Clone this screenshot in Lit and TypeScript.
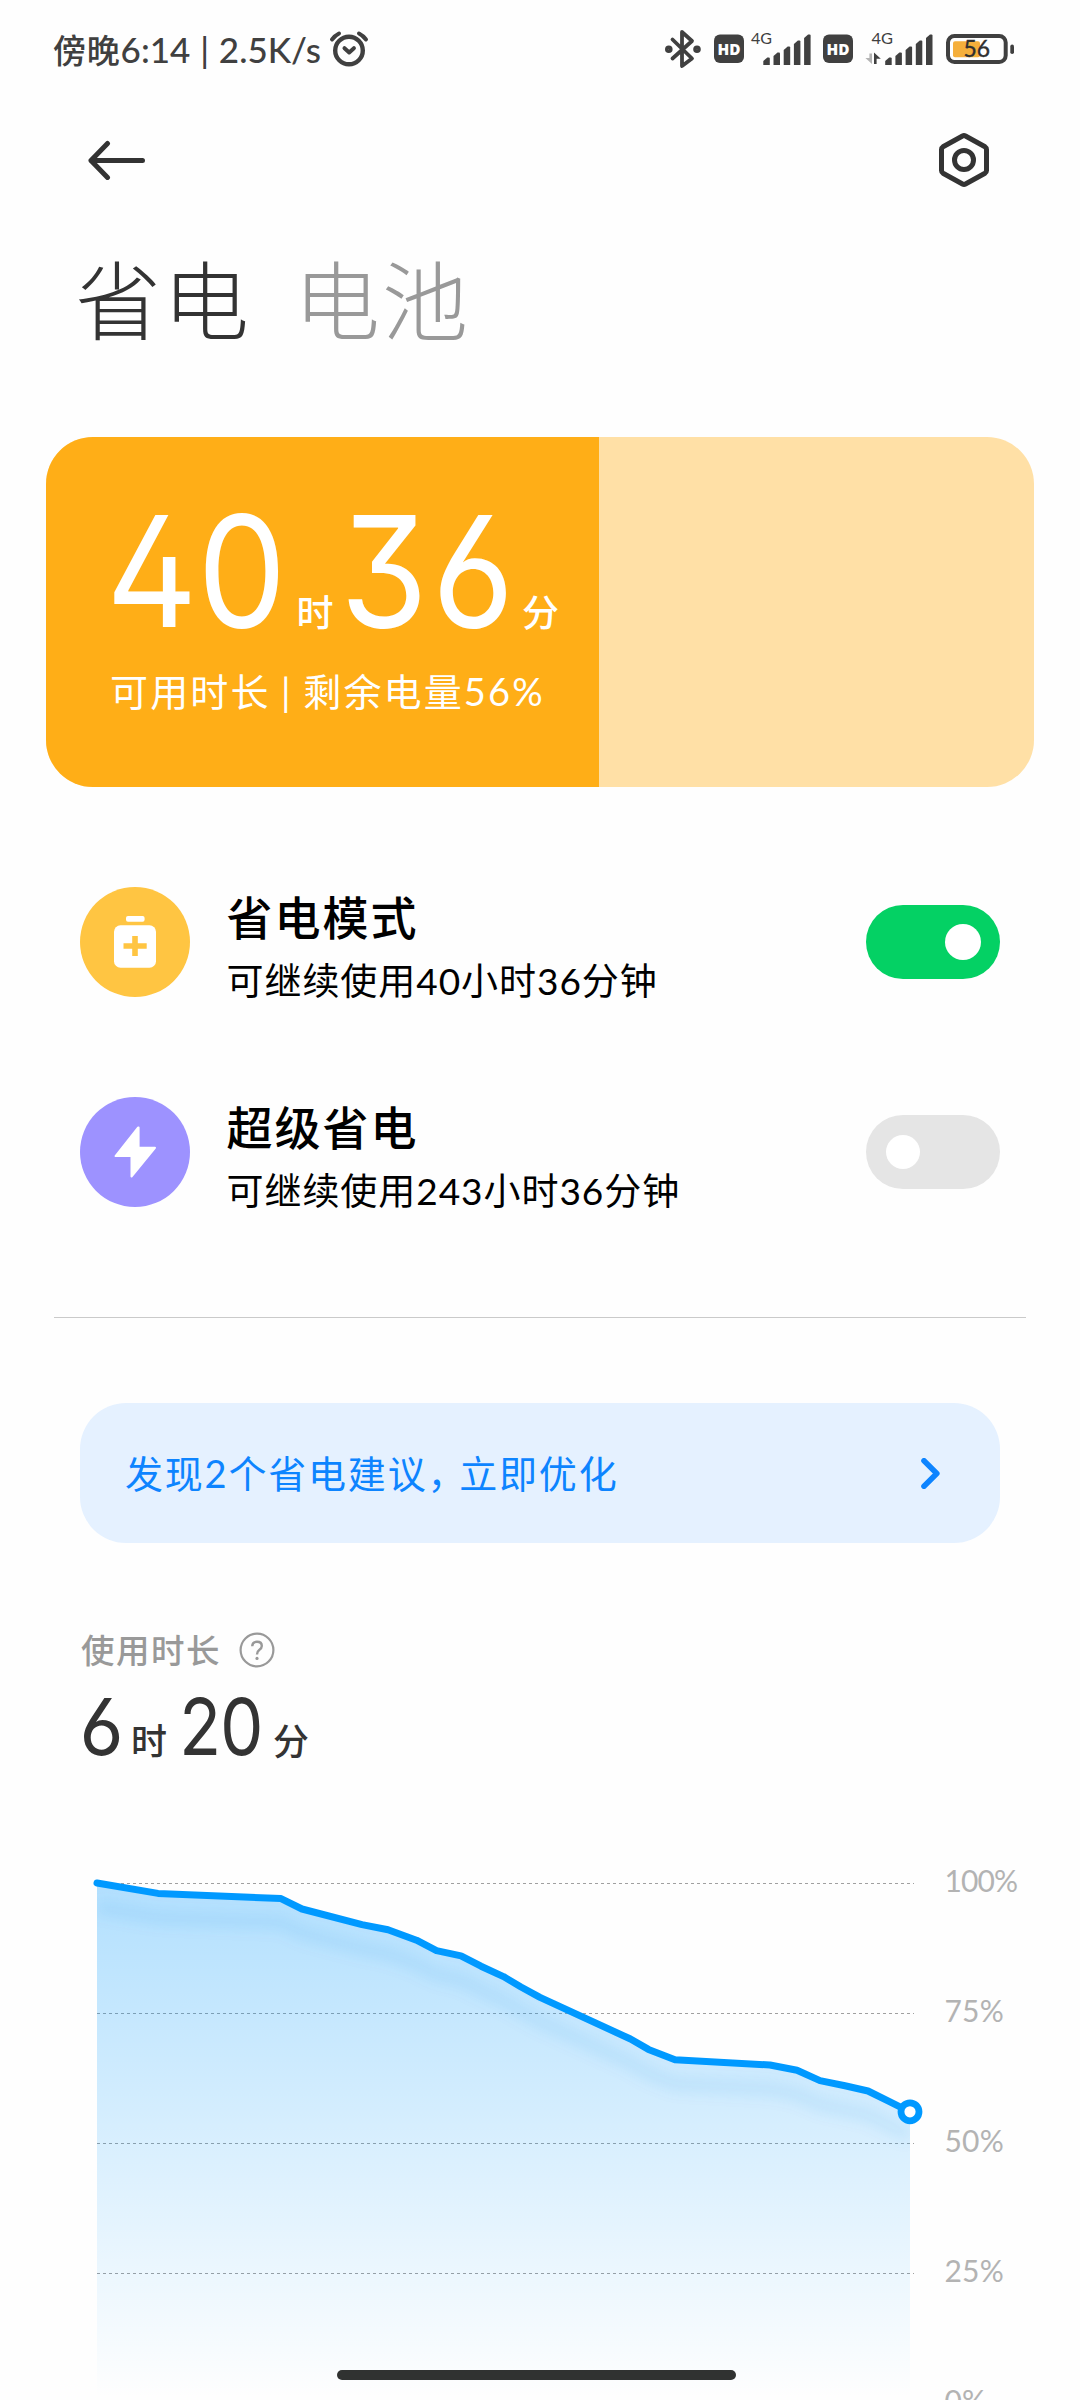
import { LitElement, html, css, svg } from "lit";
import { customElement, property } from "lit/decorators.js";

/** Battery level samples: [x in px from the chart's left edge, level in %]. */
const SAMPLES: [number, number][] = [
  [0, 100], [61, 98], [184, 97], [205, 95], [265, 92], [291, 91], [319.5, 89],
  [339.5, 87], [364, 86], [384, 84], [406.5, 82], [424, 80], [443, 78],
  [533.5, 70], [551.5, 68], [578, 66], [673, 65], [700, 64], [723, 62],
  [748, 61], [771, 60], [792, 58], [813, 56],
];
const LEVELS = [100, 75, 50, 25, 0];
const yOf = (level: number) => 20 + (100 - level) * 5.2;

@customElement("status-bar")
export class StatusBar extends LitElement {
  static styles = css`
    :host {
      display: flex;
      align-items: center;
      height: 100px;
      padding: 0 66px 0 53px;
      color: #404040;
    }
    .time {
      width: 268px;
      padding-bottom: 2px;
      font: 500 35px/40px Lato, "Noto Sans CJK SC", sans-serif;
      word-spacing: 1px;
      white-space: pre;
    }
    .period { font-size: 33px; letter-spacing: 0.8px; }
    .alarm { margin-left: 7.5px; }
    .cluster { display: flex; margin-left: auto; }
    .hd { margin: 0 7px 0 13px; }
    .hd.second { margin: 0 12px; }
    .battery { margin-left: 14px; }
    svg { display: block; overflow: visible; }
    text { font-family: Lato, "Liberation Sans", sans-serif; }
    .hd text { font-family: "Open Sans", sans-serif; font-weight: 800; }
  `;

  private bars(x: number) {
    return [8, 13, 19, 25, 31].map((h, i) => {
      const left = x + i * 10.2;
      return svg`<path d="M${left} 35V${39 - h}L${left + 4} ${35.5 - h}h1.5q1 0 1 1V35z" fill="#404040"></path>`;
    });
  }

  private hd(second = false) {
    return html`<svg class="hd ${second ? "second" : ""}" width="30" height="40" viewBox="0 0 30 40">
      <rect y="4.5" width="30" height="28.5" rx="6" fill="#404040"></rect>
      <text x="3.5" y="24.7" font-size="15.4" textLength="23" lengthAdjust="spacingAndGlyphs" fill="#fff">HD</text>
    </svg>`;
  }

  render() {
    return html`
      <span class="time"><span class="period">傍晚</span>6:14 | 2.5K/s</span>
      <svg class="alarm" width="40" height="40" viewBox="0 0 40 40" fill="none" stroke="#404040" stroke-width="4.4" stroke-linecap="round" stroke-linejoin="round">
        <circle cx="20" cy="20.5" r="13.8"></circle>
        <path d="M3 9.5Q6 5.5 10 3.5M37 9.5Q34 5.5 30 3.5" stroke-width="4"></path>
        <path d="M15.5 18.2l4.7 4.2 4.7-4.2" stroke-width="4"></path>
      </svg>
      <div class="cluster">
        <svg width="36" height="40" viewBox="0 0 36 40" fill="none" stroke="#404040" stroke-width="4" stroke-linejoin="round" stroke-linecap="round">
          <path d="M7.5 9.5L27 28.5L17 36V2L27 11L7.5 28.5" stroke-width="3.8"></path>
          <circle cx="3.8" cy="19.2" r="1.8"></circle>
          <circle cx="32" cy="19.2" r="1.8"></circle>
        </svg>
        ${this.hd()}
        <svg width="60" height="40" viewBox="0 0 60 40">
          <text x="0" y="13.9" font-size="16" textLength="21" lengthAdjust="spacingAndGlyphs" fill="#404040">4G</text>
          ${this.bars(12.3)}
        </svg>
        ${this.hd(true)}
        <svg width="67" height="40" viewBox="0 0 67 40">
          <text x="6.5" y="13.9" font-size="16" textLength="21.5" lengthAdjust="spacingAndGlyphs" fill="#404040">4G</text>
          <path d="M4.4 23.5v4.5h-4l6.6 6v-10.5z" fill="#b4b4b4"></path>
          <path d="M9 34V22.5l6.8 6.2h-4.2V34z" fill="#404040"></path>
          ${this.bars(20.2)}
        </svg>
        <svg class="battery" width="68" height="40" viewBox="0 0 68 40">
          <rect x="2" y="6" width="57.7" height="26" rx="6.5" fill="none" stroke="#404040" stroke-width="4"></rect>
          <rect x="7" y="11.2" width="27" height="16" rx="2" fill="#f5af3b"></rect>
          <rect x="64.3" y="14.6" width="3.7" height="9.4" rx="1.8" fill="#404040"></rect>
          <text x="17.4" y="27.3" font-size="22.5" textLength="26.5" lengthAdjust="spacingAndGlyphs" fill="#303030" stroke="#303030" stroke-width=".4">56</text>
        </svg>
      </div>
    `;
  }
}

@customElement("toggle-switch")
export class ToggleSwitch extends LitElement {
  @property({ type: Boolean, reflect: true }) on = false;

  static styles = css`
    :host {
      display: flex;
      align-items: center;
      box-sizing: border-box;
      width: 134px;
      height: 74px;
      padding: 0 20px;
      border-radius: 37px;
      background: #e5e5e5;
    }
    :host([on]) { justify-content: flex-end; padding: 0 19px; background: #04d164; }
    .knob { width: 34px; height: 34px; border-radius: 50%; background: #fff; }
    :host([on]) .knob { width: 36px; height: 36px; }
  `;

  render() {
    return html`<span class="knob"></span>`;
  }
}

@customElement("mode-row")
export class ModeRow extends LitElement {
  @property() heading = "";
  @property() detail = "";
  @property() kind: "saver" | "ultra" = "saver";
  @property({ type: Boolean }) on = false;

  static styles = css`
    :host { display: flex; align-items: center; height: 110px; }
    .icon { display: block; width: 110px; height: 110px; }
    .copy { flex: 1; margin-left: 36.5px; padding-top: 9px; color: #000; }
    .heading {
      font: 500 46px/56px Lato, "Noto Sans CJK SC", sans-serif;
      letter-spacing: 2px;
    }
    .detail {
      margin-top: 13px;
      font: 400 37px/44px Lato, "Noto Sans CJK SC", sans-serif;
      letter-spacing: 0.95px;
    }
  `;

  render() {
    const icon = this.kind === "saver"
      ? svg`<circle cx="55" cy="55" r="55" fill="#ffc542"></circle>
          <rect x="46" y="29" width="18.6" height="5.8" rx="2" fill="#fff"></rect>
          <rect x="34" y="38.3" width="42" height="42.4" rx="6.5" fill="#fff"></rect>
          <path d="M55 49v20M43.5 59h23.2" stroke="#ffc542" stroke-width="5.6"></path>`
      : svg`<circle cx="55" cy="55" r="55" fill="#9d92ff"></circle>
          <path d="M58 30.5L35.5 59H51.5V79.5L75 50.8H58.6V30.5z" fill="#fff" stroke="#fff" stroke-width="2" stroke-linejoin="round"></path>`;
    return html`
      <svg class="icon" viewBox="0 0 110 110">${icon}</svg>
      <div class="copy">
        <div class="heading">${this.heading}</div>
        <div class="detail">${this.detail}</div>
      </div>
      <toggle-switch ?on=${this.on}></toggle-switch>
    `;
  }
}

@customElement("usage-chart")
export class UsageChart extends LitElement {
  static styles = css`
    :host { display: flex; }
    .plot { display: block; margin-left: -20px; }
    .levels { display: flex; flex-direction: column; margin: -3px 0 0 7.5px; }
    .level {
      height: 130px;
      font: 400 30px/40px Lato, sans-serif;
      letter-spacing: 0.2px;
      color: #b3b3b3;
    }
    .level:first-child { letter-spacing: -0.9px; }
  `;

  render() {
    const points = SAMPLES.map(([x, l]) => `${x + 20},${yOf(l)}`).join(" ");
    return html`
      <svg class="plot" width="860" height="560" viewBox="0 0 860 560">
        <defs>
          <linearGradient id="fade" gradientUnits="userSpaceOnUse" x1="0" y1="20" x2="0" y2="535">
            <stop offset="0" stop-color="#0099ff" stop-opacity=".3"></stop>
            <stop offset="1" stop-color="#0099ff" stop-opacity="0"></stop>
          </linearGradient>
          <filter id="soft" x="-10%" y="-20%" width="120%" height="160%">
            <feGaussianBlur stdDeviation="7"></feGaussianBlur>
          </filter>
          <clipPath id="area"><polygon points="20,540 ${points} 833,540"></polygon></clipPath>
        </defs>
        ${LEVELS.map((l) => svg`<path d="M20 ${yOf(l) + 0.5}H837" stroke="#a0a0a0" stroke-width="1" stroke-dasharray="3 3"></path>`)}
        <polygon points="20,540 ${points} 833,540" fill="url(#fade)"></polygon>
        <g clip-path="url(#area)">
          <polyline points=${points} transform="translate(0 24)" fill="none" stroke="#0088e0" stroke-opacity=".09" stroke-width="14" filter="url(#soft)"></polyline>
        </g>
        <polyline points=${points} fill="none" stroke="#0099ff" stroke-width="7" stroke-linecap="round" stroke-linejoin="round"></polyline>
        <circle cx="833" cy=${yOf(56)} r="9" fill="#fff" stroke="#0099ff" stroke-width="6.8"></circle>
      </svg>
      <div class="levels">${LEVELS.map((l) => html`<span class="level">${l}%</span>`)}</div>
    `;
  }
}

@customElement("app-root")
export class AppRoot extends LitElement {
  static styles = css`
    :host {
      display: flex;
      flex-direction: column;
      position: relative;
      width: 1080px;
      height: 2400px;
      overflow: hidden;
      background: #fefefe;
      color: #333;
      font-family: Lato, "Noto Sans CJK SC", sans-serif;
    }
    :host > * { flex-shrink: 0; }
    svg { display: block; }
    .toolbar {
      display: flex;
      justify-content: space-between;
      align-items: center;
      height: 120px;
      padding: 0 91px 0 88px;
    }
    .tabs {
      display: flex;
      gap: 43px;
      height: 217px;
      padding: 17px 0 0 75px;
      box-sizing: border-box;
      font: 300 86px/120px "Noto Sans CJK SC", sans-serif;
      letter-spacing: 2px;
    }
    .tab.idle { color: #999; }
    .card {
      box-sizing: border-box;
      height: 350px;
      margin: 0 46px;
      border-radius: 47px;
      overflow: hidden;
      background: #ffe0a6;
    }
    .filled {
      box-sizing: border-box;
      height: 100%;
      padding: 64px 0 0 64px;
      background: #ffae17;
      color: #fff;
    }
    .amount { display: flex; align-items: baseline; white-space: nowrap; }
    .num {
      font-family: Inter, sans-serif;
      font-weight: 430;
      font-feature-settings: "ss01", "cv03", "cv06", "cv09", "tnum";
      transform-origin: 0 50%;
    }
    .card .amount { height: 140px; line-height: 140px; }
    .card .num { width: 190.5px; margin-left: -4px; font-size: 154px; letter-spacing: -2px; transform: scaleX(0.92); }
    .card .num.minutes { width: 182.5px; margin-left: 6px; letter-spacing: -5px; }
    .card .unit { width: 37px; font-size: 37px; font-weight: 500; }
    .note {
      margin-top: 25px;
      font-size: 38px;
      line-height: 50px;
      letter-spacing: 2.15px;
      word-spacing: -1.4px;
      white-space: pre;
    }
    .modes {
      display: flex;
      flex-direction: column;
      gap: 100px;
      padding: 100px 80px 110px;
    }
    .divider { height: 1px; margin: 0 54px; background: #cacaca; }
    .tip {
      display: flex;
      align-items: center;
      justify-content: space-between;
      box-sizing: border-box;
      height: 140px;
      margin: 85px 80px 0;
      padding: 0 60px 0 45px;
      border-radius: 46px;
      background: #e5f1ff;
      color: #0d84ff;
      font-size: 38px;
      letter-spacing: 1.8px;
    }
    .tip-text { padding-bottom: 3px; }
    .comma { letter-spacing: -6.2px; }
    .usage { padding: 82px 0 0 81px; }
    .label {
      display: flex;
      align-items: center;
      gap: 18px;
      height: 50px;
      color: #999;
      font-size: 33.5px;
      font-weight: 500;
      letter-spacing: 1.5px;
    }
    .label-text { padding-bottom: 3px; }
    .usage .amount { height: 90px; line-height: 90px; padding-top: 6px; }
    .usage .num { width: 54px; margin-left: -4px; font-size: 79px; letter-spacing: -3.5px; transform: scaleX(0.96); }
    .usage .num.minutes { width: 95px; margin-left: 11px; transform: scaleX(0.87); }
    .usage .unit { width: 36px; font-size: 36px; font-weight: 500; }
    usage-chart { padding-left: 97px; margin-top: 92px; }
    .home {
      position: absolute;
      left: 337px;
      top: 2370px;
      width: 399px;
      height: 10px;
      border-radius: 5px;
      background: #303231;
    }
  `;

  render() {
    return html`
      <status-bar></status-bar>
      <div class="toolbar">
        <svg width="57" height="40" viewBox="0 0 57 40" fill="none" stroke="#333" stroke-width="5" stroke-linecap="round" stroke-linejoin="round">
          <path d="M54.5 20.5H3M19.5 3.5L3 20.5L19.5 37.5"></path>
        </svg>
        <svg width="50" height="54" viewBox="0 0 50 54" fill="none" stroke="#333" stroke-width="5" stroke-linejoin="round">
          <path d="M23.5 3L4 13.8Q2.5 14.8 2.5 16.5V37.5Q2.5 39.2 4 40.2L23.5 51Q25 51.8 26.5 51L46 40.2Q47.5 39.2 47.5 37.5V16.5Q47.5 14.8 46 13.8L26.5 3Q25 2.2 23.5 3z"></path>
          <circle cx="25" cy="27" r="9.5"></circle>
        </svg>
      </div>
      <div class="tabs"><span class="tab">省电</span><span class="tab idle">电池</span></div>
      <div class="card">
        <div class="filled" style="width:56%">
          <div class="amount">
            <span class="num">40</span><span class="unit">时</span><span class="num minutes">36</span><span class="unit">分</span>
          </div>
          <div class="note">可用时长 | 剩余电量56%</div>
        </div>
      </div>
      <div class="modes">
        <mode-row kind="saver" heading="省电模式" detail="可继续使用40小时36分钟" on></mode-row>
        <mode-row kind="ultra" heading="超级省电" detail="可继续使用243小时36分钟"></mode-row>
      </div>
      <div class="divider"></div>
      <div class="tip">
        <span class="tip-text">发现2个省电建议<span class="comma">，</span>立即优化</span>
        <svg width="19" height="31" viewBox="0 0 19 31" fill="none" stroke="#0d84ff" stroke-width="5.6" stroke-linecap="round" stroke-linejoin="round">
          <path d="M3 2.8L15.8 15.5L3 28.2"></path>
        </svg>
      </div>
      <div class="usage">
        <div class="label">
          <span class="label-text">使用时长</span>
          <svg width="36" height="36" viewBox="0 0 36 36" fill="none" stroke="#999" stroke-width="2.2">
            <circle cx="18" cy="18" r="16.4"></circle>
            <path d="M13.2 14.2Q13.4 9.8 18 9.8Q22.8 9.8 22.8 14Q22.8 16.2 20.2 18Q18 19.6 18 22.4" stroke-width="2.4"></path>
            <circle cx="18" cy="26.4" r="1.6" fill="#999" stroke="none"></circle>
          </svg>
        </div>
        <div class="amount">
          <span class="num">6</span><span class="unit">时</span><span class="num minutes">20</span><span class="unit">分</span>
        </div>
      </div>
      <usage-chart></usage-chart>
      <div class="home"></div>
    `;
  }
}
